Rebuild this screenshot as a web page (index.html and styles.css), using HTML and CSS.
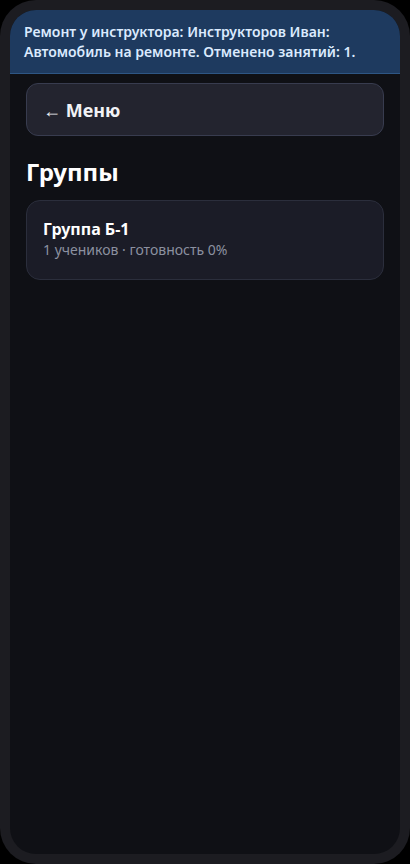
FILE: index.html
```html
<!DOCTYPE html>
<html lang="ru">
<head>
<meta charset="utf-8">
<title>Группы</title>
<link rel="stylesheet" href="styles.css">
</head>
<body>
<div class="phone">
  <div class="screen">
    <div class="banner">Ремонт у инструктора: Инструкторов Иван: Автомобиль на ремонте. Отменено занятий: 1.</div>
    <div class="content">
      <button class="menu-btn">← Меню</button>
      <h1 class="title">Группы</h1>
      <div class="card">
        <div class="card-title">Группа Б-1</div>
        <div class="card-sub">1 учеников · готовность 0%</div>
      </div>
    </div>
  </div>
</div>
</body>
</html>
```
FILE: styles.css
```css
* { box-sizing: border-box; }
html, body { margin: 0; padding: 0; background: #000; }
body { font-family: "Noto Sans", "Open Sans", sans-serif; }
.phone {
  width: 410px;
  height: 864px;
  background: #1c1c21;
  border-radius: 36px;
  padding: 10px;
}
.screen {
  height: 100%;
  background: #0f1015;
  border-radius: 26px;
  overflow: hidden;
  display: flex;
  flex-direction: column;
}
.banner {
  background: #1e3a5f;
  border-bottom: 1px solid #2e5684;
  color: #dbeafe;
  font-size: 14px;
  font-weight: 600;
  line-height: 20px;
  padding: 12px 14px 11px 14px;
}
.content {
  padding: 9px 16px 16px;
  display: flex;
  flex-direction: column;
}
.menu-btn {
  font-family: inherit;
  text-align: left;
  height: 53px;
  background: #23242f;
  border: 1px solid #383c4f;
  border-radius: 12px;
  color: #f1f2f6;
  font-size: 18px;
  font-weight: 700;
  padding: 0 16px;
}
.title {
  margin: 21px 0 0;
  color: #ffffff;
  font-size: 24px;
  font-weight: 700;
  line-height: 30px;
}
.card {
  margin-top: 13px;
  background: #1b1c27;
  border: 1px solid #2b2e3c;
  border-radius: 14px;
  padding: 18px 16px 19px;
}
.card-title {
  color: #ffffff;
  font-size: 16px;
  font-weight: 700;
  line-height: 20px;
}
.card-sub {
  margin-top: 1px;
  color: #8c91a0;
  font-size: 14px;
  line-height: 20px;
}
```
